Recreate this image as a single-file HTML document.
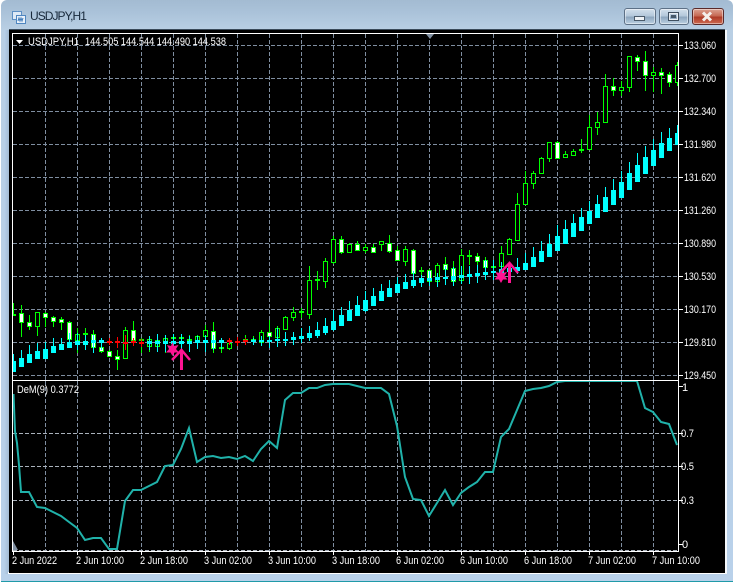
<!DOCTYPE html>
<html><head><meta charset="utf-8"><title>USDJPY,H1</title>
<style>
html,body{margin:0;padding:0;width:736px;height:582px;overflow:hidden;background:#fff}
#win{position:absolute;left:1px;top:0;width:732px;height:581px;border-radius:6px 6px 0 0;background:linear-gradient(to bottom,#a3bbd2 0,#aac2d9 12px,#b9cfe4 30px,#b9d1ea 100%);border-bottom:1px solid #1f9aa8;box-sizing:content-box}
#leftshade{position:absolute;left:4px;top:30px;width:5px;height:544px;background:linear-gradient(to right,#b9d1ea,#a4bcd4)}
#blk{position:absolute;left:9px;top:29px;width:716px;height:543px;background:#000;border-top:1px solid #3a4a5a;box-sizing:content-box}
#wline{position:absolute;left:8px;top:572px;width:719px;height:2px;background:#fff}
#rline{position:absolute;left:725px;top:30px;width:2px;height:544px;background:#f4f8fc}
#title{position:absolute;left:30px;top:9px;font:12px "Liberation Sans",sans-serif;color:#17283a;width:60px;white-space:nowrap;letter-spacing:-.95px}
.btn{position:absolute;top:8px;height:17px;box-sizing:border-box;border:1px solid #5d7086;border-radius:3px;background:linear-gradient(to bottom,#d3e0ec 0,#b4c8db 45%,#8ea7bf 55%,#bcd0e2 100%);box-shadow:inset 0 0 0 1px rgba(255,255,255,.45)}
svg{position:absolute;left:0;top:0}
text{font-family:"Liberation Sans",sans-serif;font-size:11px;fill:#fff}
</style></head><body>
<div id="win"></div>
<div id="leftshade"></div>
<div id="wline"></div>
<div id="rline"></div>
<div id="blk"></div>
<div id="title">USDJPY,H1</div>
<div class="btn" style="left:624px;width:32px"></div>
<div class="btn" style="left:659px;width:30px"></div>
<div class="btn" style="left:692px;width:32px;border-color:#5a2a2a;background:linear-gradient(to bottom,#dca394 0,#c66a55 45%,#ae3b28 55%,#cd6a50 100%)"></div>
<svg width="736" height="582" viewBox="0 0 736 582" xmlns="http://www.w3.org/2000/svg">
<defs><clipPath id="c1"><rect x="13" y="34" width="665" height="346"/></clipPath><clipPath id="c2"><rect x="13" y="381" width="665" height="170"/></clipPath></defs>
<!-- title icon -->
<rect x="12.5" y="11.5" width="9" height="8" fill="#dfeaf6" stroke="#5d8fc4"/>
<rect x="16.5" y="15.5" width="9" height="8" fill="#eaf2fb" stroke="#4f86c0"/>
<path d="M18 21l1-3 1 3 1-3 1 3 1-3" fill="none" stroke="#3c78b8"/>
<!-- window button glyphs -->
<rect x="634.5" y="16.5" width="10" height="4" fill="#eef2f6" stroke="#4a5a6a"/>
<rect x="668.5" y="12.5" width="10" height="8" fill="none" stroke="#3f4f60" stroke-width="1"/>
<rect x="669.5" y="13.5" width="8" height="6" fill="none" stroke="#e8eef4"/>
<rect x="671" y="15" width="5" height="3" fill="#46586a"/>
<path d="M703 12.5l8 8M711 12.5l-8 8" stroke="#f4efec" stroke-width="3" fill="none"/>
<!-- grid -->
<g stroke="#7f8ea0" stroke-width="1" stroke-dasharray="4 2" fill="none">
<path d="M45.5 34V380M77.5 34V380M109.5 34V380M141.5 34V380M173.5 34V380M205.5 34V380M237.5 34V380M269.5 34V380M301.5 34V380M333.5 34V380M365.5 34V380M397.5 34V380M429.5 34V380M461.5 34V380M493.5 34V380M525.5 34V380M557.5 34V380M589.5 34V380M621.5 34V380M653.5 34V380"/>
<path d="M45.5 381V551M77.5 381V551M109.5 381V551M141.5 381V551M173.5 381V551M205.5 381V551M237.5 381V551M269.5 381V551M301.5 381V551M333.5 381V551M365.5 381V551M397.5 381V551M429.5 381V551M461.5 381V551M493.5 381V551M525.5 381V551M557.5 381V551M589.5 381V551M621.5 381V551M653.5 381V551"/>
<path d="M13 45.5H678M13 78.5H678M13 111.5H678M13 144.5H678M13 177.5H678M13 210.5H678M13 243.5H678M13 276.5H678M13 309.5H678M13 342.5H678M13 375.5H678"/>
</g>
<g stroke="#aab2bc" stroke-width="1" stroke-dasharray="4 2" fill="none">
<path d="M13 433.5H678M13 466.5H678M13 500.5H678M13 550.5H678"/>
</g>
<g clip-path="url(#c1)" fill="none">
<!-- green wicks -->
<path stroke="#0f0" stroke-width="1" d="M13.5 303V316M21.5 305V337M29.5 315V330M37.5 312V336M45.5 312V327M53.5 316V327M61.5 317V330M69.5 321V340M77.5 328V353M85.5 328V342M93.5 330V353M101.5 345V353M109.5 350V356M117.5 350V370M125.5 327V359M133.5 321V342M141.5 338V353M149.5 337V352M157.5 339V352M165.5 338V353M173.5 334V345M181.5 334V345M189.5 335V352M197.5 335V345M205.5 325V340M213.5 322V353M221.5 340V353M229.5 340V350M237.5 338V346M245.5 335V342M253.5 336V342M261.5 330V342M269.5 320V342M277.5 326V337M285.5 316V329M293.5 307V321M301.5 308V318M309.5 266V319M317.5 271V290M325.5 258V288M333.5 236V264M341.5 236V254M349.5 243V253M357.5 241V251M365.5 244V253M373.5 244V253M381.5 241V251M389.5 235V253M397.5 246V260M405.5 246V266M413.5 249V275M421.5 267V275M429.5 269V281M437.5 263V287M445.5 257V285M453.5 261V285M461.5 249V281M469.5 250V265M477.5 253V275M485.5 257V280M493.5 266V280M501.5 246V268M509.5 238V255M517.5 193V241M525.5 171V205M533.5 171V189M541.5 157V174M549.5 142V162M557.5 141V158M565.5 151V158M573.5 149V156M581.5 139V153M589.5 115V149M597.5 112V135M605.5 74V122M613.5 78V96M621.5 81V96M629.5 56V92M637.5 55V71M645.5 51V91M653.5 67V92M661.5 68V94M669.5 72V87M677.5 62V86"/>
<!-- green bodies -->
<path stroke="#0f0" stroke-width="5" d="M13.5 314V316M21.5 313V323M29.5 322V327M37.5 312V327M45.5 313V318M53.5 317V322M61.5 319V323M69.5 322V340M77.5 334V341M85.5 333V335M93.5 334V348M101.5 347V352M109.5 351V357M117.5 356V360M125.5 330V359M133.5 330V341M141.5 339V341M149.5 339V347M157.5 340V347M165.5 338V343M173.5 337V339M181.5 337V339M189.5 339V341M197.5 336V341M205.5 330V337M213.5 331V349M221.5 347V349M229.5 343V349M237.5 341V343M245.5 339V341M253.5 339V341M261.5 332V343M269.5 332V337M277.5 328V338M285.5 317V330M293.5 312V318M301.5 311V313M309.5 280V315M317.5 279V281M325.5 261V282M333.5 239V263M341.5 239V253M349.5 244V253M357.5 244V251M365.5 247V251M373.5 247V253M381.5 241V245M389.5 243V252M397.5 250V261M405.5 249V262M413.5 250V274M421.5 270V272M429.5 270V282M437.5 265V282M445.5 264V270M453.5 268V282M461.5 255V281M469.5 255V257M477.5 256V262M485.5 260V268M493.5 266V268M501.5 253V267M509.5 239V255M517.5 204V241M525.5 183V205M533.5 173V184M541.5 158V174M549.5 142V159M557.5 142V159M565.5 154V158M573.5 151V156M581.5 149V151M589.5 127V150M597.5 122V128M605.5 86V123M613.5 86V91M621.5 87V91M629.5 56V88M637.5 57V62M645.5 61V76M653.5 72V76M661.5 72V76M669.5 74V83M677.5 65V83"/>
<!-- hollow interiors -->
<path stroke="#000" stroke-width="3" d="M37.5 313V326M77.5 335V340M125.5 331V358M149.5 340V346M157.5 341V346M165.5 339V342M197.5 337V340M205.5 331V336M229.5 344V348M261.5 333V342M277.5 329V337M285.5 318V329M293.5 313V317M309.5 281V314M325.5 262V281M333.5 240V262M349.5 245V252M365.5 248V250M381.5 242V244M405.5 250V261M437.5 266V281M461.5 256V280M501.5 254V266M509.5 240V254M517.5 205V240M525.5 184V204M533.5 174V183M541.5 159V173M549.5 143V158M565.5 155V157M573.5 152V155M589.5 128V149M597.5 123V127M605.5 87V122M621.5 88V90M629.5 57V87M653.5 73V75M677.5 66V82"/>
<!-- white interiors -->
<path stroke="#fff" stroke-width="3" d="M21.5 314V322M29.5 323V326M45.5 314V317M53.5 318V321M61.5 320V322M69.5 323V339M93.5 335V347M101.5 348V351M109.5 352V356M117.5 357V359M133.5 331V340M213.5 332V348M269.5 333V336M341.5 240V252M357.5 245V250M373.5 248V252M389.5 244V251M397.5 251V260M413.5 251V273M429.5 271V281M445.5 265V269M453.5 269V281M477.5 257V261M485.5 261V267M557.5 143V158M613.5 87V90M637.5 58V61M645.5 62V75M661.5 73V75M669.5 75V82"/>
<!-- red -->
<path stroke="#f00" stroke-width="1" d="M109.5 338V345M117.5 337V348M125.5 335V350M133.5 338V346M141.5 339V347M229.5 338V345M237.5 337V346M245.5 338V345"/>
<path stroke="#f00" stroke-width="5" d="M109.5 341V343M117.5 341V343M125.5 342V344M133.5 341V343M141.5 342V344M229.5 340V342M237.5 341V343M245.5 340V342"/>
<!-- cyan wicks -->
<path stroke="#0ff" stroke-width="1" d="M13.5 354V372M21.5 350V367M29.5 345V363M37.5 343V359M45.5 342V359M53.5 338V353M61.5 338V350M69.5 333V348M77.5 333V350M85.5 335V350M93.5 335V353M101.5 338V350M149.5 336V350M157.5 334V352M165.5 335V352M173.5 334V352M181.5 334V352M189.5 336V352M197.5 336V349M205.5 335V352M213.5 335V350M221.5 338V349M253.5 338V345M261.5 336V346M269.5 336V348M277.5 328V347M285.5 332V346M293.5 332V345M301.5 328V343M309.5 326V341M317.5 322V338M325.5 318V335M333.5 310V331M341.5 307V326M349.5 301V321M357.5 296V316M365.5 291V312M373.5 288V306M381.5 284V301M389.5 280V297M397.5 277V293M405.5 274V289M413.5 271V288M421.5 275V287M429.5 271V286M437.5 273V287M445.5 266V285M453.5 267V286M461.5 266V284M469.5 266V284M477.5 265V283M485.5 260V280M493.5 260V280M501.5 262V278M509.5 262V276M517.5 258V274M525.5 253V270M533.5 247V267M541.5 241V262M549.5 234V257M557.5 225V251M565.5 220V244M573.5 214V237M581.5 208V231M589.5 201V224M597.5 195V218M605.5 187V212M613.5 179V205M621.5 171V198M629.5 162V190M637.5 153V182M645.5 146V174M653.5 139V166M661.5 132V158M669.5 128V151M677.5 125V145"/>
<!-- cyan bodies -->
<path stroke="#0ff" stroke-width="5" d="M13.5 361V372M21.5 358V367M29.5 354V363M37.5 351V359M45.5 349V359M53.5 346V353M61.5 344V350M69.5 342V348M77.5 341V345M85.5 341V345M93.5 340V343M101.5 340V343M149.5 341V344M157.5 341V344M165.5 341V344M173.5 341V344M181.5 341V344M189.5 341V344M197.5 340V343M205.5 340V343M213.5 340V343M221.5 340V343M253.5 340V342M261.5 340V342M269.5 340V342M277.5 339V341M285.5 339V341M293.5 337V340M301.5 336V339M309.5 333V338M317.5 330V336M325.5 326V333M333.5 321V330M341.5 315V326M349.5 310V321M357.5 305V316M365.5 300V311M373.5 296V306M381.5 291V301M389.5 288V297M397.5 284V293M405.5 282V289M413.5 280V286M421.5 278V283M429.5 278V281M437.5 277V280M445.5 277V279M453.5 276V280M461.5 275V278M469.5 274V277M477.5 273V276M485.5 272V275M493.5 271V273M501.5 269V273M509.5 268V272M517.5 267V271M525.5 263V270M533.5 257V267M541.5 251V262M549.5 244V257M557.5 236V251M565.5 229V244M573.5 223V237M581.5 217V231M589.5 211V224M597.5 204V218M605.5 197V212M613.5 190V205M621.5 182V198M629.5 173V190M637.5 165V182M645.5 157V174M653.5 150V166M661.5 143V158M669.5 138V151M677.5 133V145"/>
<!-- arrows -->
<polygon fill="#ff1493" points="172.5,342 174,346 178.5,345 176,349 179,352.5 174.5,352.5 172.5,356 170.5,352.5 166,352.5 169,349 167,345 171,346"/>
<path stroke="#ff1493" stroke-width="3" d="M181.5 350V370"/>
<path stroke="#ff1493" stroke-width="2.5" d="M172 360L181.5 350L190 360"/>
<polygon fill="#ff1493" points="501,269 502.5,273 507,272 504.5,276 507.5,279.5 503,279.5 501,283 499,279.5 494.5,279.5 497.5,276 495.5,272 499.5,273"/>
<path stroke="#ff1493" stroke-width="3" d="M509.5 263V283"/>
<path stroke="#ff1493" stroke-width="2.5" d="M500 273L509.5 263L518 273"/>
</g>
<!-- DeM line -->
<g clip-path="url(#c2)">
<polygon points="13,541 18,550 13,550" fill="#7f8ea0"/>
<polyline fill="none" stroke="#20b2aa" stroke-width="2" points="13.5,394 15,431 17,443 19,465 21,492 29,492 37,507 45,508 53,512 61,516 69,522 77,528 85,540 93,538 101,538 109,549 117,549 125,501 133,490 141,490 149,486 157,482 165,466 173,465 181,449 189,428 197,462 205,457 213,456 221,458 229,457 237,459 245,456 253,461 261,449 269,441 277,448 285,400 293,393 301,393 309,388 317,388 325,385 333,384 341,384 349,384 357,386 365,388 373,388 381,388 389,394 397,426 405,477 413,499 421,500 429,516 437,503 445,490 453,505 461,493 469,487 477,482 485,472 493,472 501,437 509,429 517,410 525,391 533,389 541,388 549,386 557,382 565,381 629,381 637,381 645,408 653,412 661,422 669,424 677,445"/>
</g>
<!-- frame -->
<path stroke="#fff" stroke-width="1" fill="none" d="M12.5 33.5H678.5V551.5H12.5ZM13 380.5H678"/>
<polygon points="426,34 434,34 430,39" fill="#7f8ea0"/>
<path stroke="#fff" stroke-width="1" d="M679 45.5h4M679 78.5h4M679 111.5h4M679 144.5h4M679 177.5h4M679 210.5h4M679 243.5h4M679 276.5h4M679 309.5h4M679 342.5h4M679 375.5h4M679 386.5h4M679 433.5h4M679 466.5h4M679 500.5h4M679 544.5h4M13.5 552v3M77.5 552v3M141.5 552v3M205.5 552v3M269.5 552v3M333.5 552v3M397.5 552v3M461.5 552v3M525.5 552v3M589.5 552v3M653.5 552v3"/>
<polygon points="16,40 23,40 19.5,44" fill="#fff"/>
<!-- labels -->
<text x="28" y="45" textLength="51" lengthAdjust="spacingAndGlyphs">USDJPY,H1</text>
<text x="85" y="45" textLength="141" lengthAdjust="spacingAndGlyphs">144.505 144.544 144.490 144.538</text>
<text x="17" y="393" textLength="62" lengthAdjust="spacingAndGlyphs">DeM(9) 0.3772</text>
<g fill="#fff">
<text x="684" y="49" textLength="32" lengthAdjust="spacingAndGlyphs">133.060</text>
<text x="684" y="82" textLength="32" lengthAdjust="spacingAndGlyphs">132.700</text>
<text x="684" y="115" textLength="32" lengthAdjust="spacingAndGlyphs">132.340</text>
<text x="684" y="148" textLength="32" lengthAdjust="spacingAndGlyphs">131.980</text>
<text x="684" y="181" textLength="32" lengthAdjust="spacingAndGlyphs">131.620</text>
<text x="684" y="214" textLength="32" lengthAdjust="spacingAndGlyphs">131.260</text>
<text x="684" y="247" textLength="32" lengthAdjust="spacingAndGlyphs">130.890</text>
<text x="684" y="280" textLength="32" lengthAdjust="spacingAndGlyphs">130.530</text>
<text x="684" y="313" textLength="32" lengthAdjust="spacingAndGlyphs">130.170</text>
<text x="684" y="346" textLength="32" lengthAdjust="spacingAndGlyphs">129.810</text>
<text x="684" y="379" textLength="32" lengthAdjust="spacingAndGlyphs">129.450</text>
<text x="682" y="391">1</text>
<text x="681" y="437" textLength="13" lengthAdjust="spacingAndGlyphs">0.7</text>
<text x="681" y="470" textLength="13" lengthAdjust="spacingAndGlyphs">0.5</text>
<text x="681" y="504" textLength="13" lengthAdjust="spacingAndGlyphs">0.3</text>
<text x="682" y="548">0</text>
<text x="12" y="564" textLength="45" lengthAdjust="spacingAndGlyphs">2 Jun 2022</text>
<text x="76" y="564" textLength="48" lengthAdjust="spacingAndGlyphs">2 Jun 10:00</text>
<text x="140" y="564" textLength="48" lengthAdjust="spacingAndGlyphs">2 Jun 18:00</text>
<text x="204" y="564" textLength="48" lengthAdjust="spacingAndGlyphs">3 Jun 02:00</text>
<text x="268" y="564" textLength="48" lengthAdjust="spacingAndGlyphs">3 Jun 10:00</text>
<text x="332" y="564" textLength="48" lengthAdjust="spacingAndGlyphs">3 Jun 18:00</text>
<text x="396" y="564" textLength="48" lengthAdjust="spacingAndGlyphs">6 Jun 02:00</text>
<text x="460" y="564" textLength="48" lengthAdjust="spacingAndGlyphs">6 Jun 10:00</text>
<text x="524" y="564" textLength="48" lengthAdjust="spacingAndGlyphs">6 Jun 18:00</text>
<text x="588" y="564" textLength="48" lengthAdjust="spacingAndGlyphs">7 Jun 02:00</text>
<text x="652" y="564" textLength="48" lengthAdjust="spacingAndGlyphs">7 Jun 10:00</text>
</g>
</svg>
</body></html>
